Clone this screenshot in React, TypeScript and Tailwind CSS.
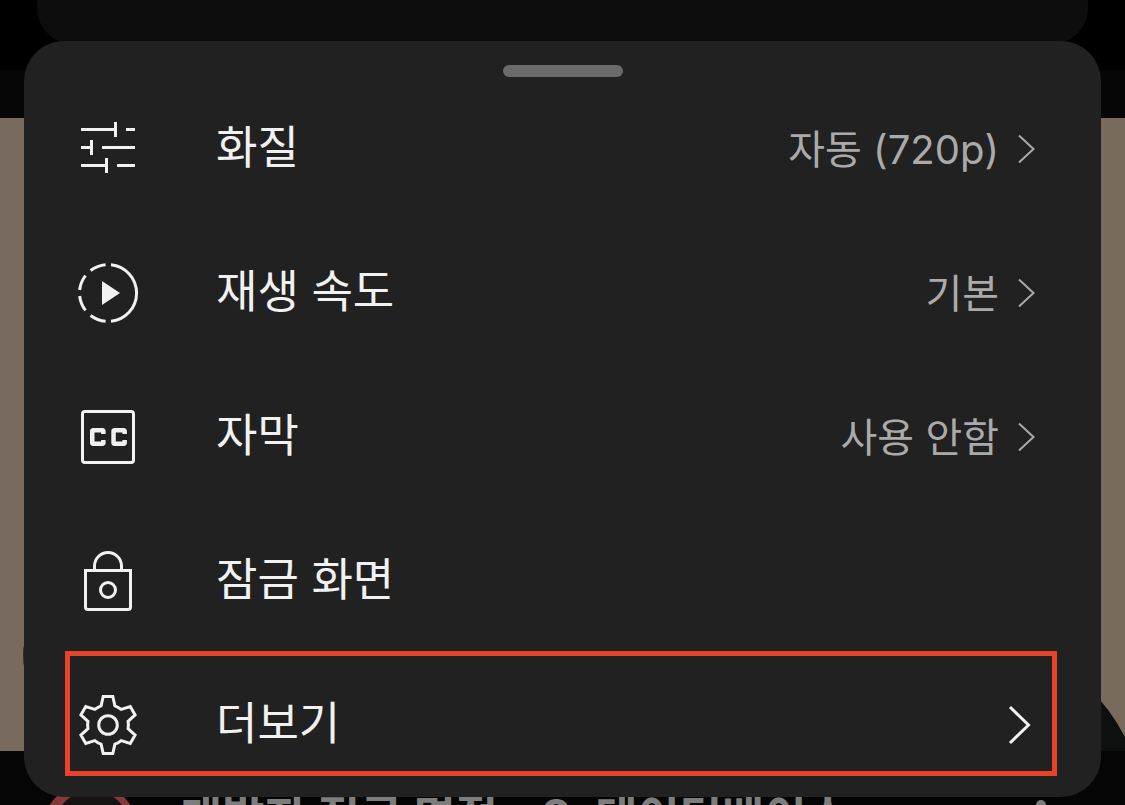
import type { ReactNode } from "react";

function SlidersIcon() {
  return (
    <svg viewBox="0 0 24 24" className="size-full" fill="currentColor" aria-hidden="true">
      <path d="M3 5h11V3h1v5h-1V6H3zM18 5h3v1h-3zM3 11h3V9h1v5H6v-2H3zM10 11h11v1H10zM3 17h8v-2h1v5h-1v-2H3zM15 17h6v1h-6z" />
    </svg>
  );
}

function SpeedIcon() {
  return (
    <svg viewBox="0 0 24 24" className="size-full" fill="none" stroke="currentColor" aria-hidden="true">
      <path d="M10 8v8l6-4z" fill="currentColor" stroke="none" />
      <path d="M13 2.55A9.5 9.5 0 0 1 13 21.45M11.2 2.55A9.5 9.5 0 0 0 6.2 4.5M4.5 6.2A9.5 9.5 0 0 0 2.55 11M2.55 13A9.5 9.5 0 0 0 4.5 17.8M6.2 19.5A9.5 9.5 0 0 0 11.2 21.45" />
    </svg>
  );
}

function CaptionsIcon() {
  return (
    <svg viewBox="0 0 24 24" className="size-full" fill="currentColor" aria-hidden="true">
      <rect x="3.5" y="3.5" width="17" height="17" rx="0.8" fill="none" stroke="currentColor" />
      <path d="M11.2 11H9.700v-.5h-2.200v3h2.200V13h1.500v1c0 .55-.45 1-1 1H7c-.55 0-1-.45-1-1v-4c0-.55.45-1 1-1h3.200c.55 0 1 .45 1 1zM18.300 11h-1.500v-.5h-2.200v3h2.200V13h1.500v1c0 .55-.45 1-1 1h-3.200c-.55 0-1-.45-1-1v-4c0-.55.45-1 1-1h3.200c.55 0 1 .45 1 1z" />
    </svg>
  );
}

function LockIcon() {
  return (
    <svg viewBox="0 0 24 24" className="size-full" fill="none" stroke="currentColor" aria-hidden="true">
      <path d="M4.5 8.5h15V20.7q0 .8-.8.8H5.3q-.8 0-.8-.8zM7.5 8.5V7a4.5 4.5 0 0 1 9 0v1.5" />
      <circle cx="12" cy="15" r="2.5" />
    </svg>
  );
}

function GearIcon() {
  return (
    <svg viewBox="0 0 24 24" className="size-full" fill="none" stroke="currentColor" aria-hidden="true">
      <path d="M10.4 2.5H13.6L14.3 5.6A6.8 6.8 0 0 1 16.39 6.81L19.43 5.86L21.03 8.64L18.69 10.79A6.8 6.8 0 0 1 18.69 13.21L21.03 15.36L19.43 18.14L16.39 17.19A6.8 6.8 0 0 1 14.3 18.4L13.6 21.5H10.4L9.7 18.4A6.8 6.8 0 0 1 7.61 17.19L4.57 18.14L2.97 15.36L5.31 13.21A6.8 6.8 0 0 1 5.31 10.79L2.97 8.64L4.57 5.86L7.61 6.81A6.8 6.8 0 0 1 9.7 5.6Z" />
      <circle cx="12" cy="12" r="3.1" />
    </svg>
  );
}

function Chevron({ large = false }: { large?: boolean }) {
  return large ? (
    <svg viewBox="0 0 24 42" className="mr-1 h-[42px] w-6 shrink-0" fill="none" stroke="currentColor" strokeWidth="3" aria-hidden="true">
      <path d="M2 3L20.5 21L2 39" />
    </svg>
  ) : (
    <svg viewBox="0 0 18 30" className="h-[30px] w-[18px] shrink-0" fill="none" stroke="currentColor" strokeWidth="2" aria-hidden="true">
      <path d="M1 1.500L15.500 15L1 28.500" />
    </svg>
  );
}

type Item = {
  label: string;
  icon: ReactNode;
  value?: string;
  more?: boolean;
};

const items: Item[] = [
  { label: "화질", icon: <SlidersIcon />, value: "자동 (720p)" },
  { label: "재생 속도", icon: <SpeedIcon />, value: "기본" },
  { label: "자막", icon: <CaptionsIcon />, value: "사용 안함" },
  { label: "잠금 화면", icon: <LockIcon /> },
  { label: "더보기", icon: <GearIcon />, more: true },
];

function MenuRow({ item }: { item: Item }) {
  return (
    <li className="relative">
      <button type="button" className="flex h-36 w-full items-center pr-[65px] pl-12 text-left text-[#f1f1f1]">
        <span className="size-[72px] shrink-0">{item.icon}</span>
        <span className="ml-[72px] flex-1 pb-0.5 text-[45px] leading-[60px]">{item.label}</span>
        {item.value && (
          <span className="flex items-center gap-[19px] text-[#aaaaaa]">
            <span className="pt-0.5 text-[40px] leading-[56px]">{item.value}</span>
            <Chevron />
          </span>
        )}
        {item.more && <Chevron large />}
      </button>
      {item.more && (
        <span className="pointer-events-none absolute -top-0.5 right-11 bottom-[21px] left-[41px] border-[5px] border-[#e84329]" />
      )}
    </li>
  );
}

function Backdrop() {
  return (
    <div className="absolute inset-0 flex flex-col bg-[#050505]">
      <div className="h-[70px] shrink-0 bg-black px-[37px]">
        <div className="h-11 rounded-b-[36px] bg-[#0d0d0d]" />
      </div>
      <div className="h-12 shrink-0 bg-[#060606]" />
      <div className="flex h-[633px] shrink-0 items-end justify-between bg-[#786b5e]">
        <svg viewBox="0 0 30 110" className="mb-9 h-[110px] w-[30px]" aria-hidden="true">
          <path d="M30 30Q23 34 23 50Q23 68 30 74z" fill="#2b2825" />
        </svg>
        <svg viewBox="0 0 34 60" className="h-[60px] w-[34px]" aria-hidden="true">
          <path d="M0 0Q18 16 34 46V60H0z" fill="#0e100f" />
        </svg>
      </div>
      <div className="flex h-[54px] min-h-0 items-start overflow-hidden pt-8 pr-[79px] pl-[42px] text-[#7d7d7d]">
        <svg viewBox="0 0 96 96" className="size-24 shrink-0" aria-hidden="true">
          <circle cx="48" cy="48" r="48" fill="#853a3a" />
          <circle cx="50" cy="44" r="37" fill="#171313" />
        </svg>
        <p className="ml-[42px] flex-1 pt-[3px] text-[46px] leading-[60px] font-bold whitespace-nowrap">
          개발자 전공 면접 - 8. 데이터베이스
        </p>
        <svg viewBox="0 0 10 50" className="mt-[17px] h-[50px] w-[10px] shrink-0" fill="currentColor" aria-hidden="true">
          <circle cx="5" cy="5" r="5" />
          <circle cx="5" cy="22" r="5" />
          <circle cx="5" cy="39" r="5" />
        </svg>
      </div>
    </div>
  );
}

export default function App() {
  return (
    <main className="relative min-h-screen overflow-hidden bg-black font-['Inter','Noto_Sans_CJK_KR',sans-serif]">
      <Backdrop />
      <div className="relative px-6 pt-[41px]">
        <section className="rounded-[40px] bg-[#212121] pt-6">
          <div className="mx-auto h-3 w-[120px] rounded-full bg-[#6b6b6b]" />
          <ul>
            {items.map((item) => (
              <MenuRow key={item.label} item={item} />
            ))}
          </ul>
        </section>
      </div>
    </main>
  );
}
